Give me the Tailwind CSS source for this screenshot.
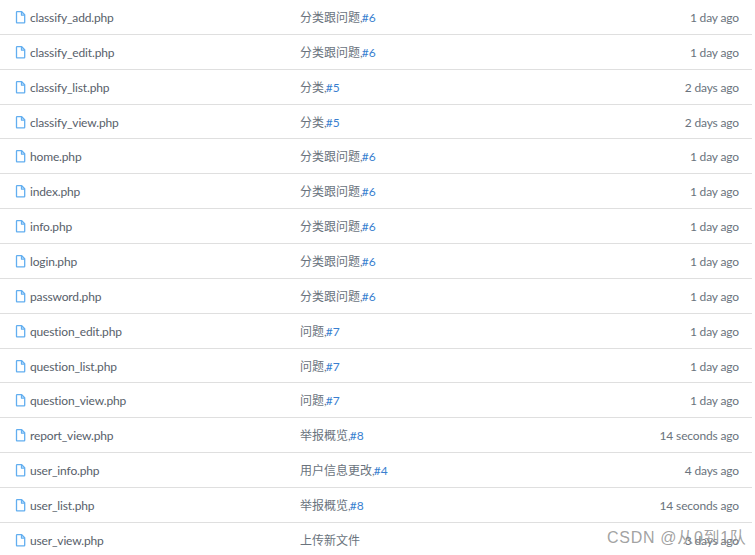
<!DOCTYPE html>
<html lang="en">
  <head>
    <meta charset="UTF-8">
    <title>Files</title>
    <script src="https://cdn.jsdelivr.net/npm/@tailwindcss/browser@4"></script>
  </head>
  <body class="bg-white overflow-hidden relative h-[555px] font-['Lato','Noto_Sans_CJK_SC',sans-serif] text-[12px] tracking-[-0.15px] text-[#57606a]">
    <div id="rows" class="w-[752px]"></div>
    <div class="absolute left-[607px] top-[526px] text-[16px] leading-[24px] text-[#8a8a8a]/80 font-['Liberation_Sans','Noto_Sans_CJK_SC',sans-serif] tracking-[0.7px]">CSDN @从0到1队</div>
    <script>
      const files = [
        ["classify_add.php", "分类跟问题,", "#6", "1 day ago"],
        ["classify_edit.php", "分类跟问题,", "#6", "1 day ago"],
        ["classify_list.php", "分类,", "#5", "2 days ago"],
        ["classify_view.php", "分类,", "#5", "2 days ago"],
        ["home.php", "分类跟问题,", "#6", "1 day ago"],
        ["index.php", "分类跟问题,", "#6", "1 day ago"],
        ["info.php", "分类跟问题,", "#6", "1 day ago"],
        ["login.php", "分类跟问题,", "#6", "1 day ago"],
        ["password.php", "分类跟问题,", "#6", "1 day ago"],
        ["question_edit.php", "问题,", "#7", "1 day ago"],
        ["question_list.php", "问题,", "#7", "1 day ago"],
        ["question_view.php", "问题,", "#7", "1 day ago"],
        ["report_view.php", "举报概览,", "#8", "14 seconds ago"],
        ["user_info.php", "用户信息更改,", "#4", "4 days ago"],
        ["user_list.php", "举报概览,", "#8", "14 seconds ago"],
        ["user_view.php", "上传新文件", "", "3 days ago"]
      ];
      document.getElementById("rows").innerHTML = files.map(f => `
        <div class="flex items-center h-[34.87px] pl-[15px] pr-[13px] pt-[2px] border-b border-[#dfdfdf] last:border-b-0">
          <svg class="w-[11px] h-[13px] mr-[4px] shrink-0 -mt-[1px]" viewBox="0 0 11 13" fill="none" stroke="#62aef0" stroke-width="1.3" stroke-linejoin="round">
            <path d="M1.5 1.3a.6.6 0 0 1 .6-.6h4.6l3 3v7.6a.6.6 0 0 1-.6.6H2.1a.6.6 0 0 1-.6-.6z"/>
            <path d="M6.5 .8v3.4h3.4"/>
          </svg>
          <span class="w-[270px] shrink-0">${f[0]}</span>
          <span class="flex-1 text-[#6a737d] tracking-normal">${f[1]}<span class="text-[#3a7fd0] -ml-[1px]">${f[2]}</span></span>
          <span class="text-[#6a737d]">${f[3]}</span>
        </div>`).join("");
    </script>
  </body>
</html>
